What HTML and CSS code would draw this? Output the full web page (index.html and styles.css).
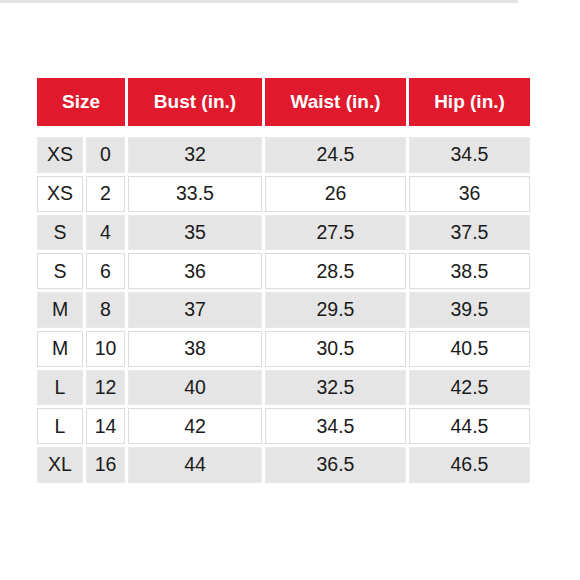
FILE: index.html
```html
<!DOCTYPE html>
<html>
<head>
<meta charset="utf-8">
<link rel="stylesheet" href="styles.css">
</head>
<body>
<div class="topline"></div>
<div class="chart">
  <div class="head span2">Size</div>
  <div class="head">Bust (in.)</div>
  <div class="head">Waist (in.)</div>
  <div class="head">Hip (in.)</div>
  <div class="spacer"></div>

  <div class="c g">XS</div><div class="c g">0</div><div class="c g">32</div><div class="c g">24.5</div><div class="c g">34.5</div>
  <div class="c">XS</div><div class="c">2</div><div class="c">33.5</div><div class="c">26</div><div class="c">36</div>
  <div class="c g">S</div><div class="c g">4</div><div class="c g">35</div><div class="c g">27.5</div><div class="c g">37.5</div>
  <div class="c">S</div><div class="c">6</div><div class="c">36</div><div class="c">28.5</div><div class="c">38.5</div>
  <div class="c g">M</div><div class="c g">8</div><div class="c g">37</div><div class="c g">29.5</div><div class="c g">39.5</div>
  <div class="c">M</div><div class="c">10</div><div class="c">38</div><div class="c">30.5</div><div class="c">40.5</div>
  <div class="c g">L</div><div class="c g">12</div><div class="c g">40</div><div class="c g">32.5</div><div class="c g">42.5</div>
  <div class="c">L</div><div class="c">14</div><div class="c">42</div><div class="c">34.5</div><div class="c">44.5</div>
  <div class="c g">XL</div><div class="c g">16</div><div class="c g">44</div><div class="c g">36.5</div><div class="c g">46.5</div>
</div>
</body>
</html>
```
FILE: styles.css
```css
html, body {
  margin: 0;
  padding: 0;
  background: #ffffff;
}
body {
  width: 580px;
  height: 580px;
  overflow: hidden;
  font-family: "Liberation Sans", Arial, sans-serif;
}
.topline {
  width: 518px;
  height: 3px;
  background: #e3e3e4;
}
.chart {
  display: grid;
  grid-template-columns: 46px 39px 134px 141px 121px;
  grid-template-rows: 48px 5px repeat(9, 35.75px);
  gap: 3px;
  margin: 75px 0 0 37px;
  width: 493px;
}
.head {
  background: #e01a2c;
  color: #ffffff;
  font-weight: bold;
  font-size: 19px;
  display: flex;
  align-items: center;
  justify-content: center;
}
.span2 {
  grid-column: span 2;
}
.spacer {
  grid-column: 1 / -1;
}
.c {
  box-sizing: border-box;
  border: 1px solid #dcdcdc;
  background: #ffffff;
  color: #1a1a1a;
  font-size: 19.5px;
  display: flex;
  align-items: center;
  justify-content: center;
}
.c.g {
  background: #e5e5e5;
  border-color: #e9e9e9;
}
```
